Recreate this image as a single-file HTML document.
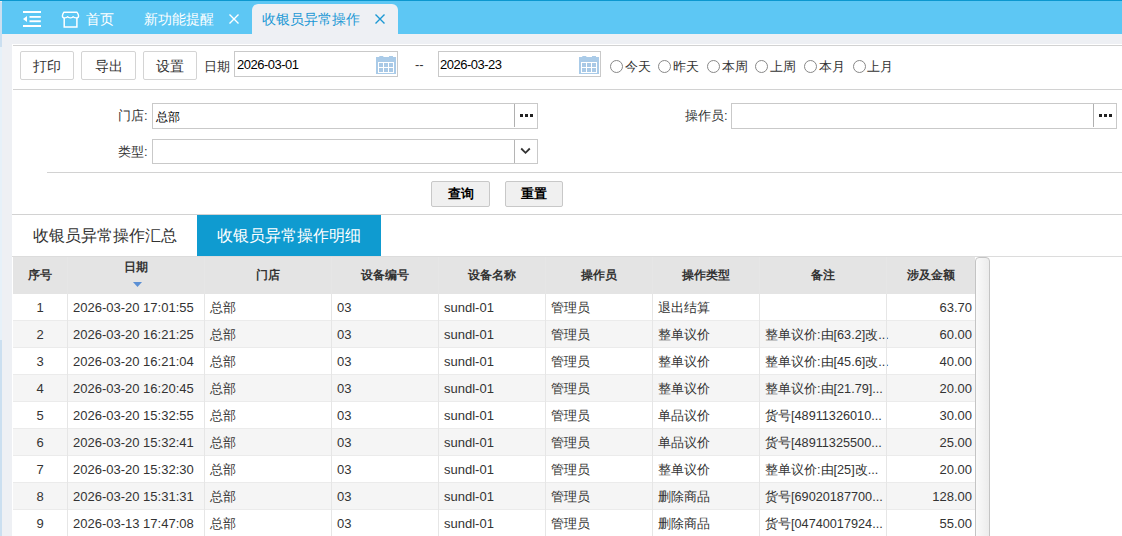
<!DOCTYPE html>
<html><head><meta charset="utf-8">
<style>
*{box-sizing:border-box;margin:0;padding:0}
html,body{width:1122px;height:536px;overflow:hidden;background:#fff;font-family:"Liberation Sans",sans-serif;color:#333}
.a{position:absolute}
#lstrip{left:0;top:1px;width:2px;height:535px;background:linear-gradient(180deg,#e8eef5 0,#e8eef5 1px,#cbdff0 1px,#cbdff0 46px,#e6f1f9 46px,#e6f1f9 339px,#cbdff0 339px)}
#topline{left:0;top:0;width:1122px;height:1px;background:#0b97cf}
#grey{left:2px;top:34px;width:10px;height:502px;background:#eef0f4}
#greytop{left:2px;top:34px;width:1120px;height:10px;background:#eef0f4}
#tabbar{left:2px;top:1px;width:1120px;height:33px;background:#5dc7f4}
.tt{font-size:14px;color:#fff;line-height:16px;white-space:nowrap}
.btn{height:29px;border:1px solid #d4d4d4;border-radius:2px;background:#fff;font-size:14px;text-align:center;line-height:28px;color:#333}
.inp{border:1px solid #c9c9c9;background:#fff;font-size:12px;color:#000}
.hline{height:1px;background:#d2d2d2}
.lbl{font-size:13px;color:#333;white-space:nowrap;line-height:14px}
.radio{width:13px;height:13px;border:1px solid #888;border-radius:50%;background:#fff}
.qbtn{height:26px;border:1px solid #c8c8c8;border-radius:2px;background:#f0f0f0;font-size:13px;font-weight:bold;text-align:center;line-height:24px;color:#000}
table{border-collapse:collapse;table-layout:fixed;font-size:12.6px}
td,th{border-right:1px solid #e2e2e2;white-space:nowrap;overflow:hidden;padding:0 5px}
th{height:37px;background:#e5e5e5;font-weight:bold;font-size:12px;color:#333;text-align:center}
td{height:27px;border-top:1px solid #e8e8e8;color:#333}
tr.alt td{background:#f6f6f6}
.th{font-size:12px;font-weight:bold;color:#333;text-align:center;line-height:14px;white-space:nowrap}
.td{font-size:13px;color:#333;line-height:14px;white-space:nowrap}
</style></head><body>
<div class="a" id="tabbar"></div>
<div class="a" id="greytop"></div>
<div class="a" id="grey"></div>
<div class="a" id="lstrip"></div>
<div class="a" id="topline"></div>

<!-- menu icon -->
<svg class="a" style="left:22px;top:10px" width="20" height="18" viewBox="0 0 20 18">
<rect x="1" y="1" width="18" height="2" fill="#fff"/>
<rect x="7.5" y="6" width="11.3" height="1.8" fill="#fff"/>
<rect x="7.5" y="10.3" width="11.3" height="1.9" fill="#fff"/>
<rect x="1" y="15" width="18" height="2" fill="#fff"/>
<path d="M1 9 L5 6 L5 12 Z" fill="#fff"/>
</svg>
<!-- store icon -->
<svg class="a" style="left:61px;top:10px" width="19" height="19" viewBox="0 0 19 19">
<path d="M2.9 2.2 H15.9 Q17.6 4.5 17.6 6 Q17.6 7.9 15.2 7.9 Q12.6 7.9 12.2 6.6 Q11.7 7.9 9.4 7.9 Q7.1 7.9 6.7 6.6 Q6.2 7.9 3.8 7.9 Q1.4 7.9 1.4 6 Q1.4 4.5 2.9 2.2 Z" fill="none" stroke="#fff" stroke-width="1.4" stroke-linejoin="round"/>
<path d="M3.2 8 V16.9 H15.9 V8" fill="none" stroke="#fff" stroke-width="1.5"/>
</svg>
<div class="a tt" style="left:86px;top:11px">首页</div>
<div class="a tt" style="left:144px;top:11px">新功能提醒</div>
<svg class="a" style="left:229px;top:14px" width="10" height="10"><path d="M0.5 0.5 L9.5 9.5 M9.5 0.5 L0.5 9.5" stroke="#fff" stroke-width="1.4"/></svg>
<div class="a" style="left:252px;top:4px;width:146px;height:30px;background:#eef0f4;border-radius:6px 6px 0 0"></div>
<div class="a tt" style="left:262px;top:11px;color:#1b98d4">收银员异常操作</div>
<svg class="a" style="left:375px;top:14px" width="10" height="10"><path d="M0.5 0.5 L9.5 9.5 M9.5 0.5 L0.5 9.5" stroke="#1b98d4" stroke-width="1.4"/></svg>

<!-- content -->
<div class="a" style="left:12px;top:44px;width:1110px;height:492px;background:#fff"></div>
<div class="a hline" style="left:13px;top:45px;width:1109px"></div>

<div class="a btn" style="left:20px;top:51px;width:54px">打印</div>
<div class="a btn" style="left:81px;top:51px;width:55px">导出</div>
<div class="a btn" style="left:143px;top:51px;width:54px">设置</div>
<div class="a lbl" style="left:204px;top:60px">日期</div>
<div class="a inp" style="left:234px;top:51px;width:164px;height:26px;padding:5px 0 0 2px;font-size:13px;letter-spacing:-0.5px">2026-03-01</div>
<div class="a lbl" style="left:415px;top:58px">--</div>
<div class="a inp" style="left:438px;top:51px;width:163px;height:26px;padding:5px 0 0 1px;font-size:13px;letter-spacing:-0.5px">2026-03-23</div>

<div class="a hline" style="left:13px;top:89px;width:1109px"></div>

<div class="a lbl" style="left:118px;top:109px">门店:</div>
<div class="a inp" style="left:152px;top:103px;width:386px;height:26px;padding:5px 0 0 3px">总部</div>
<div class="a lbl" style="left:118px;top:145px">类型:</div>
<div class="a inp" style="left:152px;top:139px;width:386px;height:25px"></div>
<div class="a lbl" style="left:685px;top:109px">操作员:</div>
<div class="a inp" style="left:731px;top:103px;width:386px;height:26px"></div>

<svg class="a" style="left:376px;top:56px" width="20" height="18" viewBox="0 0 20 18">
<rect x="0" y="1" width="20" height="17" fill="#aacbe8"/>
<rect x="3.3" y="0" width="4" height="2" fill="#aacbe8"/><rect x="13" y="0" width="4" height="2" fill="#aacbe8"/>
<rect x="2" y="6" width="16" height="11" fill="#fff"/>
<g fill="#a9c9e6"><rect x="3" y="7" width="4" height="4"/><rect x="8" y="7" width="4" height="4"/><rect x="13" y="7" width="4" height="4"/>
<rect x="3" y="12" width="4" height="4"/><rect x="8" y="12" width="4" height="4"/><rect x="13" y="12" width="4" height="4"/></g>
</svg>
<svg class="a" style="left:579px;top:56px" width="20" height="18" viewBox="0 0 20 18">
<rect x="0" y="1" width="20" height="17" fill="#aacbe8"/>
<rect x="3.3" y="0" width="4" height="2" fill="#aacbe8"/><rect x="13" y="0" width="4" height="2" fill="#aacbe8"/>
<rect x="2" y="6" width="16" height="11" fill="#fff"/>
<g fill="#a9c9e6"><rect x="3" y="7" width="4" height="4"/><rect x="8" y="7" width="4" height="4"/><rect x="13" y="7" width="4" height="4"/>
<rect x="3" y="12" width="4" height="4"/><rect x="8" y="12" width="4" height="4"/><rect x="13" y="12" width="4" height="4"/></g>
</svg>
<div class="a radio" style="left:610px;top:60px"></div><div class="a lbl" style="left:625px;top:60px">今天</div>
<div class="a radio" style="left:658px;top:60px"></div><div class="a lbl" style="left:673px;top:60px">昨天</div>
<div class="a radio" style="left:707px;top:60px"></div><div class="a lbl" style="left:722px;top:60px">本周</div>
<div class="a radio" style="left:755px;top:60px"></div><div class="a lbl" style="left:770px;top:60px">上周</div>
<div class="a radio" style="left:804px;top:60px"></div><div class="a lbl" style="left:819px;top:60px">本月</div>
<div class="a radio" style="left:853px;top:60px"></div><div class="a lbl" style="left:867px;top:60px">上月</div>
<div class="a" style="left:514px;top:104px;width:1px;height:23px;background:#b0b0b0"></div><svg class="a" style="left:520px;top:114px" width="14" height="4"><rect x="0" y="0" width="3" height="3" fill="#222"/><rect x="5" y="0" width="3" height="3" fill="#222"/><rect x="10" y="0" width="3" height="3" fill="#222"/></svg>
<div class="a" style="left:1093px;top:104px;width:1px;height:23px;background:#b0b0b0"></div><svg class="a" style="left:1099px;top:114px" width="14" height="4"><rect x="0" y="0" width="3" height="3" fill="#222"/><rect x="5" y="0" width="3" height="3" fill="#222"/><rect x="10" y="0" width="3" height="3" fill="#222"/></svg>
<div class="a" style="left:514px;top:140px;width:1px;height:23px;background:#b5b5b5"></div><svg class="a" style="left:520px;top:147px" width="11" height="8"><path d="M1.2 1.5 L5.5 5.8 L9.8 1.5" fill="none" stroke="#333" stroke-width="1.8"/></svg>
<div class="a hline" style="left:47px;top:172px;width:1075px"></div>
<div class="a qbtn" style="left:431px;top:181px;width:59px">查询</div>
<div class="a qbtn" style="left:505px;top:181px;width:58px">重置</div>
<div class="a hline" style="left:12px;top:214px;width:1110px"></div>

<div class="a" style="left:33px;top:227px;font-size:16px;color:#333;line-height:18px">收银员异常操作汇总</div>
<div class="a" style="left:197px;top:215px;width:184px;height:41px;background:#0f9bd0;color:#fff;font-size:16px;line-height:41px;text-align:center">收银员异常操作明细</div>
<div class="a hline" style="left:12px;top:256px;width:1110px;background:#dcdcdc"></div>







<!--TBL-->
<div class="a" style="left:13px;top:257px;width:962px;height:37px;background:#e4e4e4"></div>
<div class="a th" style="left:13px;top:268px;width:54px">序号</div>
<div class="a th" style="left:67px;top:260px;width:137px">日期</div>
<svg class="a" style="left:133px;top:282px" width="9" height="5"><path d="M0 0 H9 L4.5 5 Z" fill="#5a8fd4"/></svg>
<div class="a th" style="left:204px;top:268px;width:127px">门店</div>
<div class="a th" style="left:331px;top:268px;width:107px">设备编号</div>
<div class="a th" style="left:438px;top:268px;width:107px">设备名称</div>
<div class="a th" style="left:545px;top:268px;width:107px">操作员</div>
<div class="a th" style="left:652px;top:268px;width:107px">操作类型</div>
<div class="a th" style="left:759px;top:268px;width:127px">备注</div>
<div class="a th" style="left:886px;top:268px;width:89px">涉及金额</div>
<div class="a" style="left:13px;top:294px;width:962px;height:27px;background:#fff"></div>
<div class="a" style="left:13px;top:320px;width:962px;height:1px;background:#ebebeb"></div>
<div class="a td" style="left:13px;top:301px;width:54px;text-align:center">1</div>
<div class="a td" style="left:73px;top:301px">2026-03-20 17:01:55</div>
<div class="a td" style="left:210px;top:301px">总部</div>
<div class="a td" style="left:337px;top:301px">03</div>
<div class="a td" style="left:444px;top:301px">sundl-01</div>
<div class="a td" style="left:551px;top:301px">管理员</div>
<div class="a td" style="left:658px;top:301px">退出结算</div>
<div class="a td" style="left:765px;top:301px;font-size:12.7px"></div>
<div class="a td" style="left:886px;top:301px;width:86px;text-align:right">63.70</div>
<div class="a" style="left:13px;top:321px;width:962px;height:27px;background:#f5f5f5"></div>
<div class="a" style="left:13px;top:347px;width:962px;height:1px;background:#ebebeb"></div>
<div class="a td" style="left:13px;top:328px;width:54px;text-align:center">2</div>
<div class="a td" style="left:73px;top:328px">2026-03-20 16:21:25</div>
<div class="a td" style="left:210px;top:328px">总部</div>
<div class="a td" style="left:337px;top:328px">03</div>
<div class="a td" style="left:444px;top:328px">sundl-01</div>
<div class="a td" style="left:551px;top:328px">管理员</div>
<div class="a td" style="left:658px;top:328px">整单议价</div>
<div class="a td" style="left:765px;top:328px;font-size:12.7px">整单议价:由[63.2]改...</div>
<div class="a td" style="left:886px;top:328px;width:86px;text-align:right">60.00</div>
<div class="a" style="left:13px;top:348px;width:962px;height:27px;background:#fff"></div>
<div class="a" style="left:13px;top:374px;width:962px;height:1px;background:#ebebeb"></div>
<div class="a td" style="left:13px;top:355px;width:54px;text-align:center">3</div>
<div class="a td" style="left:73px;top:355px">2026-03-20 16:21:04</div>
<div class="a td" style="left:210px;top:355px">总部</div>
<div class="a td" style="left:337px;top:355px">03</div>
<div class="a td" style="left:444px;top:355px">sundl-01</div>
<div class="a td" style="left:551px;top:355px">管理员</div>
<div class="a td" style="left:658px;top:355px">整单议价</div>
<div class="a td" style="left:765px;top:355px;font-size:12.7px">整单议价:由[45.6]改...</div>
<div class="a td" style="left:886px;top:355px;width:86px;text-align:right">40.00</div>
<div class="a" style="left:13px;top:375px;width:962px;height:27px;background:#f5f5f5"></div>
<div class="a" style="left:13px;top:401px;width:962px;height:1px;background:#ebebeb"></div>
<div class="a td" style="left:13px;top:382px;width:54px;text-align:center">4</div>
<div class="a td" style="left:73px;top:382px">2026-03-20 16:20:45</div>
<div class="a td" style="left:210px;top:382px">总部</div>
<div class="a td" style="left:337px;top:382px">03</div>
<div class="a td" style="left:444px;top:382px">sundl-01</div>
<div class="a td" style="left:551px;top:382px">管理员</div>
<div class="a td" style="left:658px;top:382px">整单议价</div>
<div class="a td" style="left:765px;top:382px;font-size:12.7px">整单议价:由[21.79]...</div>
<div class="a td" style="left:886px;top:382px;width:86px;text-align:right">20.00</div>
<div class="a" style="left:13px;top:402px;width:962px;height:27px;background:#fff"></div>
<div class="a" style="left:13px;top:428px;width:962px;height:1px;background:#ebebeb"></div>
<div class="a td" style="left:13px;top:409px;width:54px;text-align:center">5</div>
<div class="a td" style="left:73px;top:409px">2026-03-20 15:32:55</div>
<div class="a td" style="left:210px;top:409px">总部</div>
<div class="a td" style="left:337px;top:409px">03</div>
<div class="a td" style="left:444px;top:409px">sundl-01</div>
<div class="a td" style="left:551px;top:409px">管理员</div>
<div class="a td" style="left:658px;top:409px">单品议价</div>
<div class="a td" style="left:765px;top:409px;font-size:12.7px">货号[48911326010...</div>
<div class="a td" style="left:886px;top:409px;width:86px;text-align:right">30.00</div>
<div class="a" style="left:13px;top:429px;width:962px;height:27px;background:#f5f5f5"></div>
<div class="a" style="left:13px;top:455px;width:962px;height:1px;background:#ebebeb"></div>
<div class="a td" style="left:13px;top:436px;width:54px;text-align:center">6</div>
<div class="a td" style="left:73px;top:436px">2026-03-20 15:32:41</div>
<div class="a td" style="left:210px;top:436px">总部</div>
<div class="a td" style="left:337px;top:436px">03</div>
<div class="a td" style="left:444px;top:436px">sundl-01</div>
<div class="a td" style="left:551px;top:436px">管理员</div>
<div class="a td" style="left:658px;top:436px">单品议价</div>
<div class="a td" style="left:765px;top:436px;font-size:12.7px">货号[48911325500...</div>
<div class="a td" style="left:886px;top:436px;width:86px;text-align:right">25.00</div>
<div class="a" style="left:13px;top:456px;width:962px;height:27px;background:#fff"></div>
<div class="a" style="left:13px;top:482px;width:962px;height:1px;background:#ebebeb"></div>
<div class="a td" style="left:13px;top:463px;width:54px;text-align:center">7</div>
<div class="a td" style="left:73px;top:463px">2026-03-20 15:32:30</div>
<div class="a td" style="left:210px;top:463px">总部</div>
<div class="a td" style="left:337px;top:463px">03</div>
<div class="a td" style="left:444px;top:463px">sundl-01</div>
<div class="a td" style="left:551px;top:463px">管理员</div>
<div class="a td" style="left:658px;top:463px">整单议价</div>
<div class="a td" style="left:765px;top:463px;font-size:12.7px">整单议价:由[25]改...</div>
<div class="a td" style="left:886px;top:463px;width:86px;text-align:right">20.00</div>
<div class="a" style="left:13px;top:483px;width:962px;height:27px;background:#f5f5f5"></div>
<div class="a" style="left:13px;top:509px;width:962px;height:1px;background:#ebebeb"></div>
<div class="a td" style="left:13px;top:490px;width:54px;text-align:center">8</div>
<div class="a td" style="left:73px;top:490px">2026-03-20 15:31:31</div>
<div class="a td" style="left:210px;top:490px">总部</div>
<div class="a td" style="left:337px;top:490px">03</div>
<div class="a td" style="left:444px;top:490px">sundl-01</div>
<div class="a td" style="left:551px;top:490px">管理员</div>
<div class="a td" style="left:658px;top:490px">删除商品</div>
<div class="a td" style="left:765px;top:490px;font-size:12.7px">货号[69020187700...</div>
<div class="a td" style="left:886px;top:490px;width:86px;text-align:right">128.00</div>
<div class="a" style="left:13px;top:510px;width:962px;height:27px;background:#fff"></div>
<div class="a" style="left:13px;top:536px;width:962px;height:1px;background:#ebebeb"></div>
<div class="a td" style="left:13px;top:517px;width:54px;text-align:center">9</div>
<div class="a td" style="left:73px;top:517px">2026-03-13 17:47:08</div>
<div class="a td" style="left:210px;top:517px">总部</div>
<div class="a td" style="left:337px;top:517px">03</div>
<div class="a td" style="left:444px;top:517px">sundl-01</div>
<div class="a td" style="left:551px;top:517px">管理员</div>
<div class="a td" style="left:658px;top:517px">删除商品</div>
<div class="a td" style="left:765px;top:517px;font-size:12.7px">货号[04740017924...</div>
<div class="a td" style="left:886px;top:517px;width:86px;text-align:right">55.00</div>
<div class="a" style="left:67px;top:257px;width:1px;height:280px;background:#e6e6e6"></div>
<div class="a" style="left:204px;top:257px;width:1px;height:280px;background:#e6e6e6"></div>
<div class="a" style="left:331px;top:257px;width:1px;height:280px;background:#e6e6e6"></div>
<div class="a" style="left:438px;top:257px;width:1px;height:280px;background:#e6e6e6"></div>
<div class="a" style="left:545px;top:257px;width:1px;height:280px;background:#e6e6e6"></div>
<div class="a" style="left:652px;top:257px;width:1px;height:280px;background:#e6e6e6"></div>
<div class="a" style="left:759px;top:257px;width:1px;height:280px;background:#e6e6e6"></div>
<div class="a" style="left:886px;top:257px;width:1px;height:280px;background:#e6e6e6"></div>
<div class="a" style="left:975px;top:257px;width:15px;height:290px;border:1px solid #c4c4c4;border-radius:4px 4px 0 0;background:linear-gradient(90deg,#fafafa,#ececec)"></div>
<!--/TBL-->
</body></html>
